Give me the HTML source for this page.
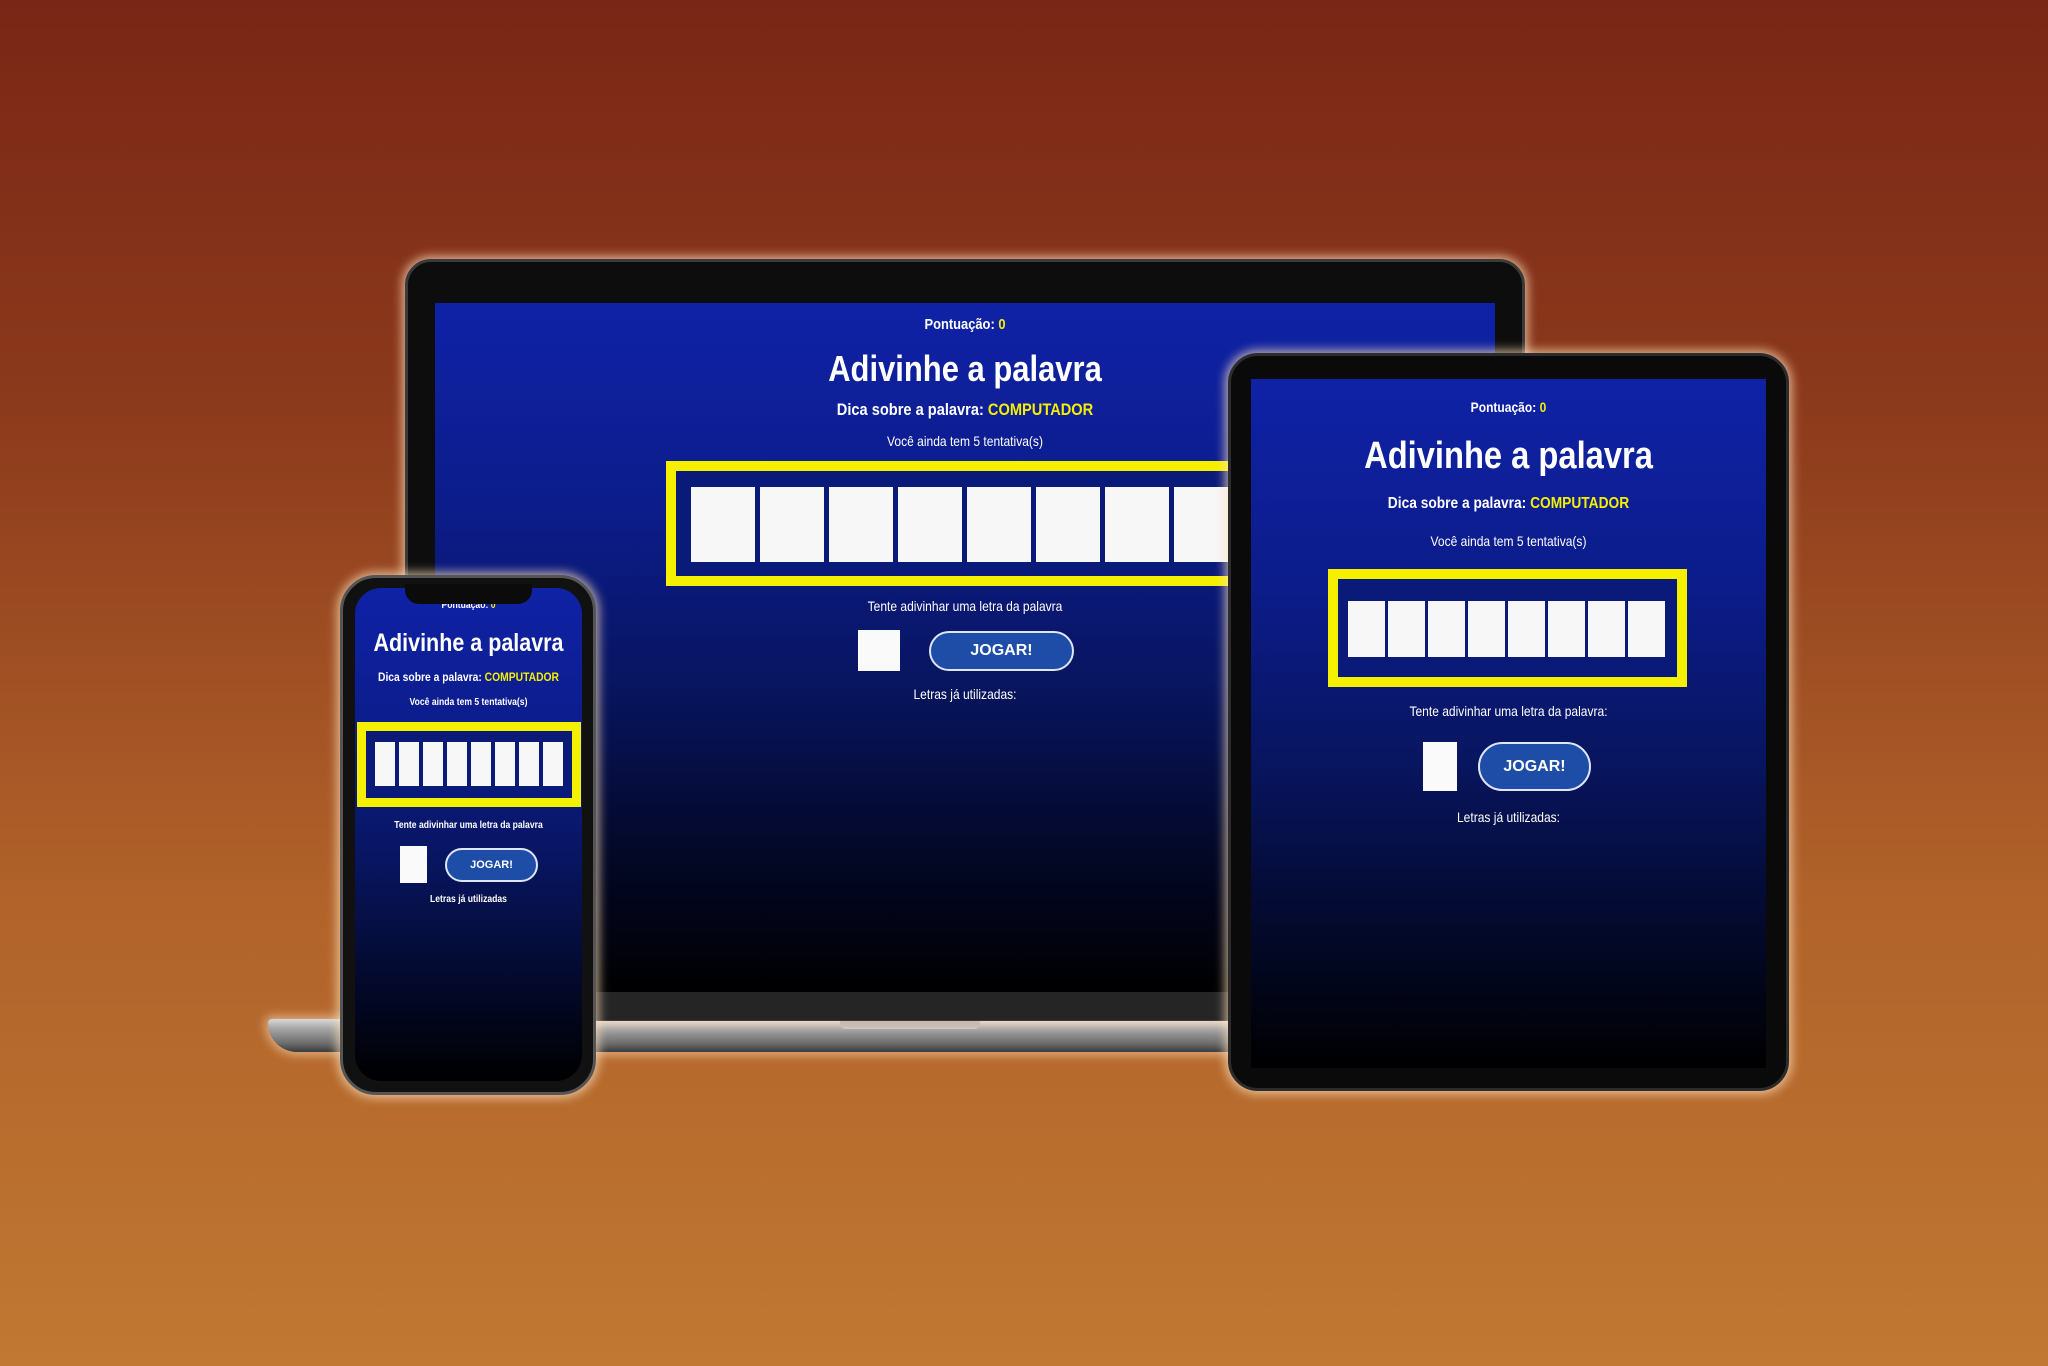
<!DOCTYPE html>
<html><head><meta charset="utf-8"><style>
*{margin:0;padding:0;box-sizing:border-box}
body{width:2048px;height:1366px;overflow:hidden;position:relative;background:linear-gradient(180deg,#7a2616 0%,#8c3a1c 30%,#b0622a 65%,#c07832 100%);font-family:"Liberation Sans Narrow","Liberation Sans",sans-serif;color:#fff}
.a{position:absolute}
.scr{position:absolute;overflow:hidden}
.t{position:absolute;left:0;right:0;text-align:center;font-weight:bold;white-space:nowrap;transform:scaleX(.86)}
.y{color:#f5f000}
.tile{position:absolute;background:#f7f7f7}
.btn{position:absolute;background:#1e4da8;border:2px solid #dfe6f5;border-radius:999px;text-align:center;font-weight:bold;color:#fff}
.inp{position:absolute;background:#fafafa}
.glow{box-shadow:0 0 10px 3px rgba(255,225,190,.7)}
</style></head><body>

<div class="a" style="left:268px;top:1019px;width:1000px;height:33px;border-radius:4px 4px 14px 30px;background:linear-gradient(180deg,#d8d8d8 0%,#a4a4a4 30%,#6b6b6b 75%,#3a3a3a 100%);box-shadow:0 0 10px 3px rgba(255,225,190,.6)"></div>
<div class="a" style="left:840px;top:1019px;width:140px;height:10px;background:linear-gradient(180deg,#888,#c8c8c8);border-radius:0 0 6px 6px"></div>
<div class="a glow" style="left:405px;top:259px;width:1120px;height:762px;border-radius:26px 26px 0 0;background:#0d0d0d;border:3px solid #3a3a3a"></div>
<div class="a" style="left:435px;top:992px;width:1060px;height:28px;background:#252525"></div>
<div class="scr" style="left:435px;top:303px;width:1060px;height:689px;background:linear-gradient(180deg,#0f22a6 0%,#0c1c8a 30%,#081560 55%,#030826 80%,#000 100%)">
 <div class="t" style="top:13px;font-size:15px">Pontuação: <span class="y">0</span></div>
 <div class="t" style="top:45px;font-size:36px">Adivinhe a palavra</div>
 <div class="t" style="top:97px;font-size:17px">Dica sobre a palavra: <span class="y">COMPUTADOR</span></div>
 <div class="t" style="top:130px;font-size:14px;font-weight:normal">Você ainda tem 5 tentativa(s)</div>
 <div class="a" style="left:231px;top:158px;width:580px;height:125px;border:10px solid #f5f000;background:#0a1a78"></div>
 <div class="tile" style="left:256px;top:184px;width:64px;height:75px"></div>
 <div class="tile" style="left:325px;top:184px;width:64px;height:75px"></div>
 <div class="tile" style="left:394px;top:184px;width:64px;height:75px"></div>
 <div class="tile" style="left:463px;top:184px;width:64px;height:75px"></div>
 <div class="tile" style="left:532px;top:184px;width:64px;height:75px"></div>
 <div class="tile" style="left:601px;top:184px;width:64px;height:75px"></div>
 <div class="tile" style="left:670px;top:184px;width:64px;height:75px"></div>
 <div class="tile" style="left:739px;top:184px;width:64px;height:75px"></div>
 <div class="t" style="top:295px;font-size:14px;font-weight:normal">Tente adivinhar uma letra da palavra</div>
 <div class="inp" style="left:423px;top:327px;width:42px;height:41px"></div>
 <div class="btn" style="left:494px;top:328px;width:145px;height:40px;line-height:36px;font-size:16px">JOGAR!</div>
 <div class="t" style="top:383px;font-size:14px;font-weight:normal">Letras já utilizadas:</div>
</div>

<div class="a glow" style="left:1228px;top:353px;width:561px;height:738px;border-radius:30px;background:#0a0a0a;border:3px solid #2c2c2c"></div>
<div class="scr" style="left:1251px;top:379px;width:515px;height:689px;background:linear-gradient(180deg,#0f22a6 0%,#0c1c8a 30%,#081560 55%,#030826 82%,#000 100%)">
 <div class="t" style="top:20px;font-size:14px">Pontuação: <span class="y">0</span></div>
 <div class="t" style="top:56px;font-size:38px">Adivinhe a palavra</div>
 <div class="t" style="top:116px;font-size:16px">Dica sobre a palavra: <span class="y">COMPUTADOR</span></div>
 <div class="t" style="top:154px;font-size:14px;font-weight:normal">Você ainda tem 5 tentativa(s)</div>
 <div class="a" style="left:77px;top:190px;width:359px;height:118px;border:10px solid #f5f000;background:#0a1a78"></div>
 <div class="tile" style="left:97px;top:222px;width:37px;height:56px"></div>
 <div class="tile" style="left:137px;top:222px;width:37px;height:56px"></div>
 <div class="tile" style="left:177px;top:222px;width:37px;height:56px"></div>
 <div class="tile" style="left:217px;top:222px;width:37px;height:56px"></div>
 <div class="tile" style="left:257px;top:222px;width:37px;height:56px"></div>
 <div class="tile" style="left:297px;top:222px;width:37px;height:56px"></div>
 <div class="tile" style="left:337px;top:222px;width:37px;height:56px"></div>
 <div class="tile" style="left:377px;top:222px;width:37px;height:56px"></div>
 <div class="t" style="top:324px;font-size:14px;font-weight:normal">Tente adivinhar uma letra da palavra:</div>
 <div class="inp" style="left:172px;top:363px;width:34px;height:49px"></div>
 <div class="btn" style="left:227px;top:363px;width:113px;height:49px;line-height:45px;font-size:16px">JOGAR!</div>
 <div class="t" style="top:430px;font-size:14px;font-weight:normal">Letras já utilizadas:</div>
</div>

<div class="a glow" style="left:340px;top:575px;width:256px;height:520px;border-radius:36px;background:#111;border:3px solid #555"></div>
<div class="scr" style="left:355px;top:588px;width:227px;height:493px;border-radius:26px;background:linear-gradient(180deg,#0f22a6 0%,#0c1c8a 30%,#081560 55%,#030826 82%,#000 100%)">
 <div class="t" style="top:12px;font-size:10px">Pontuação: <span class="y">0</span></div>
 <div class="t" style="top:41px;font-size:25px">Adivinhe a palavra</div>
 <div class="t" style="top:82px;font-size:12px">Dica sobre a palavra: <span class="y">COMPUTADOR</span></div>
 <div class="t" style="top:109px;font-size:10px">Você ainda tem 5 tentativa(s)</div>
 <div class="a" style="left:2px;top:134px;width:224px;height:85px;border:9px solid #f5f000;background:#0a1a78"></div>
 <div class="tile" style="left:20px;top:154px;width:20px;height:44px"></div>
 <div class="tile" style="left:44px;top:154px;width:20px;height:44px"></div>
 <div class="tile" style="left:68px;top:154px;width:20px;height:44px"></div>
 <div class="tile" style="left:92px;top:154px;width:20px;height:44px"></div>
 <div class="tile" style="left:116px;top:154px;width:20px;height:44px"></div>
 <div class="tile" style="left:140px;top:154px;width:20px;height:44px"></div>
 <div class="tile" style="left:164px;top:154px;width:20px;height:44px"></div>
 <div class="tile" style="left:188px;top:154px;width:20px;height:44px"></div>
 <div class="t" style="top:232px;font-size:10px">Tente adivinhar uma letra da palavra</div>
 <div class="inp" style="left:45px;top:258px;width:27px;height:37px"></div>
 <div class="btn" style="left:90px;top:260px;width:93px;height:34px;line-height:30px;font-size:11px">JOGAR!</div>
 <div class="t" style="top:306px;font-size:10px">Letras já utilizadas</div>
</div>
<div class="a" style="left:405px;top:584px;width:127px;height:20px;background:#0b0b0b;border-radius:0 0 14px 14px"></div>
</body></html>
